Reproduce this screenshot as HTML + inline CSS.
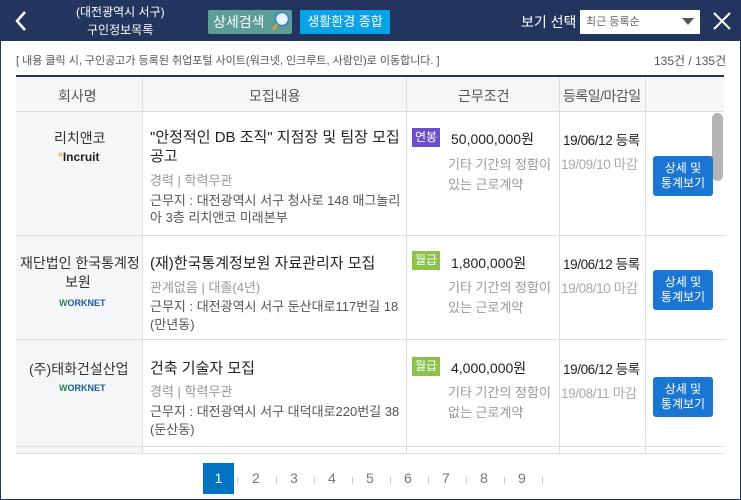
<!DOCTYPE html>
<html><head><meta charset="utf-8"><style>
*{margin:0;padding:0;box-sizing:border-box}
body{width:741px;height:500px;overflow:hidden;background:#fff;font-family:"Liberation Sans","Noto Sans CJK KR",sans-serif;position:relative}
.a{position:absolute;white-space:nowrap}
.hd{position:absolute;left:0;top:0;width:741px;height:41px;background:#22355e}
.frame{position:absolute;left:0;top:0;width:741px;height:500px;border:1px solid #22355e;border-top:none}
.w{color:#fff}
.vl{position:absolute;width:1px;background:#dedede}
.hl{position:absolute;height:1px;background:#dedede}
.t{font-size:15px;color:#222}
.g{font-size:13px;color:#999}
.d{font-size:13px;color:#555}
.bd{position:absolute;width:28px;height:19px;color:#fff;font-size:12px;text-align:center;line-height:19px}
.btn{position:absolute;left:653px;width:60px;height:40px;background:#1a76d2;border-radius:3px;color:#fff;font-size:12px;text-align:center;line-height:15px;padding-top:5px}
.pg{position:absolute;top:470px;font-size:14px;color:#777}
.sep{position:absolute;top:477px;width:1px;height:7px;background:#ccc}
.dt{font-size:14px;color:#222}
.dd{font-size:13.5px;color:#222;letter-spacing:-0.4px}
.dg{font-size:13.5px;color:#aaa;letter-spacing:-0.4px}
</style></head><body>
<div class="hd"></div>
<svg class="a" style="left:14px;top:10px" width="14" height="22"><path d="M11 2 L3 11 L11 20" stroke="#fff" stroke-width="2.5" fill="none"/></svg>
<div class="a w" style="left:76px;top:3px;font-size:12px">(대전광역시 서구)</div>
<div class="a w" style="left:87px;top:21px;font-size:12px">구인정보목록</div>
<div class="a" style="left:208px;top:10px;width:84px;height:24px;background:#5c9d98;border-radius:2px;color:#fff;font-size:14px;line-height:24px;padding-left:5px">상세검색</div>
<svg class="a" style="left:270px;top:11px" width="20" height="22"><circle cx="12" cy="8" r="6.5" fill="#e8f4ff" stroke="#3a7bd5" stroke-width="1.5"/><path d="M7 13 L3 19" stroke="#e0a040" stroke-width="2.5"/></svg>
<div class="a" style="left:300px;top:10px;width:90px;height:24px;background:#0aa3ea;color:#fff;font-size:13px;line-height:24px;text-align:center">생활환경 종합</div>
<div class="a w" style="left:521px;top:12px;font-size:14px">보기 선택</div>
<div class="a" style="left:580px;top:10px;width:120px;height:24px;background:#fff;font-size:11px;color:#666;line-height:24px;padding-left:6px">최근 등록순</div>
<svg class="a" style="left:682px;top:18px" width="12" height="8"><path d="M0 0 L12 0 L6 7Z" fill="#555"/></svg>
<svg class="a" style="left:713px;top:12px" width="18" height="18"><path d="M1 1 L17 17 M17 1 L1 17" stroke="#fff" stroke-width="2"/></svg>
<div class="frame"></div>

<div class="a" style="left:16px;top:52px;font-size:11px;color:#555">[ 내용 클릭 시, 구인공고가 등록된 취업포털 사이트(워크넷, 인크루트, 사람인)로 이동합니다. ]</div>
<div class="a" style="left:654px;top:52px;font-size:12px;color:#555">135건 / 135건</div>
<div class="a" style="left:16px;top:75px;width:708px;height:2px;background:#22355e"></div>
<div class="a" style="left:16px;top:77px;width:708px;height:34px;background:#f5f6f8"></div>
<div class="a" style="left:16px;top:111px;width:126px;height:343px;background:#f5f6f8"></div>
<div class="vl" style="left:142px;top:77px;height:377px"></div>
<div class="vl" style="left:406px;top:77px;height:377px"></div>
<div class="vl" style="left:559px;top:77px;height:377px"></div>
<div class="vl" style="left:645px;top:77px;height:377px"></div>
<div class="hl" style="left:16px;top:111px;width:708px"></div>
<div class="hl" style="left:16px;top:235px;width:708px"></div>
<div class="hl" style="left:16px;top:339px;width:708px"></div>
<div class="hl" style="left:16px;top:446px;width:708px"></div>
<div class="hl" style="left:16px;top:453px;width:708px"></div>
<div class="a" style="left:58px;top:86px;font-size:14px;color:#555">회사명</div>
<div class="a" style="left:249px;top:86px;font-size:14px;color:#555">모집내용</div>
<div class="a" style="left:458px;top:86px;font-size:14px;color:#555">근무조건</div>
<div class="a" style="left:563px;top:86px;font-size:14px;color:#555;letter-spacing:-0.5px">등록일/마감일</div>
<div class="a" style="left:712px;top:113px;width:11px;height:68px;background:#b5b5b5;border-radius:6px"></div>

<!-- row1 -->
<div class="a" style="left:54px;top:128px;font-size:14px;color:#333">리치앤코</div>
<div class="a" style="left:58px;top:150px;font-size:12px;font-weight:bold;color:#222"><span style="color:#f39c12">°</span>Incruit</div>
<div class="a t" style="left:150px;top:126px">"안정적인 DB 조직" 지점장 및 팀장 모집</div>
<div class="a t" style="left:150px;top:145px">공고</div>
<div class="a g" style="left:150px;top:170px">경력 | 학력무관</div>
<div class="a d" style="left:150px;top:190px">근무지 : 대전광역시 서구 청사로 148 매그놀리</div>
<div class="a d" style="left:150px;top:207px">아 3층 리치앤코 미래본부</div>
<div class="bd" style="left:412px;top:128px;background:#6a4fc9">연봉</div>
<div class="a dt" style="left:451px;top:129px">50,000,000원</div>
<div class="a g" style="left:448px;top:154px">기타 기간의 정함이</div>
<div class="a g" style="left:448px;top:174px">있는 근로계약</div>
<div class="a dd" style="left:563px;top:129px">19/06/12 등록</div>
<div class="a dg" style="left:561px;top:153px">19/09/10 마감</div>
<div class="btn" style="top:156px">상세 및<br>통계보기</div>

<!-- row2 -->
<div class="a" style="left:20px;top:253px;font-size:14px;color:#333">재단법인 한국통계정</div>
<div class="a" style="left:65px;top:272px;font-size:14px;color:#333">보원</div>
<div class="a" style="left:59px;top:298px;font-size:9px;font-weight:bold;color:#2c8a3c">W<span style="color:#1a5aa0">ORKNET</span></div>
<div class="a t" style="left:150px;top:252px">(재)한국통계정보원 자료관리자 모집</div>
<div class="a g" style="left:150px;top:277px">관계없음 | 대졸(4년)</div>
<div class="a d" style="left:150px;top:296px">근무지 : 대전광역시 서구 둔산대로117번길 18</div>
<div class="a d" style="left:150px;top:314px">(만년동)</div>
<div class="bd" style="left:412px;top:251px;background:#8bc34a">월급</div>
<div class="a dt" style="left:451px;top:253px">1,800,000원</div>
<div class="a g" style="left:448px;top:277px">기타 기간의 정함이</div>
<div class="a g" style="left:448px;top:297px">있는 근로계약</div>
<div class="a dd" style="left:563px;top:253px">19/06/12 등록</div>
<div class="a dg" style="left:561px;top:277px">19/08/10 마감</div>
<div class="btn" style="top:270px">상세 및<br>통계보기</div>

<!-- row3 -->
<div class="a" style="left:29px;top:359px;font-size:14px;color:#333">(주)태화건설산업</div>
<div class="a" style="left:59px;top:383px;font-size:9px;font-weight:bold;color:#2c8a3c">W<span style="color:#1a5aa0">ORKNET</span></div>
<div class="a t" style="left:150px;top:357px">건축 기술자 모집</div>
<div class="a g" style="left:150px;top:381px">경력 | 학력무관</div>
<div class="a d" style="left:150px;top:401px">근무지 : 대전광역시 서구 대덕대로220번길 38</div>
<div class="a d" style="left:150px;top:419px">(둔산동)</div>
<div class="bd" style="left:412px;top:357px;background:#8bc34a">월급</div>
<div class="a dt" style="left:451px;top:358px">4,000,000원</div>
<div class="a g" style="left:448px;top:382px">기타 기간의 정함이</div>
<div class="a g" style="left:448px;top:402px">없는 근로계약</div>
<div class="a dd" style="left:563px;top:358px">19/06/12 등록</div>
<div class="a dg" style="left:561px;top:382px">19/08/11 마감</div>
<div class="btn" style="top:377px">상세 및<br>통계보기</div>

<!-- pagination -->
<div class="a" style="left:203px;top:463px;width:31px;height:31px;background:#0073c2;color:#fff;font-size:14px;text-align:center;line-height:31px">1</div>
<div class="pg" style="left:252px">2</div><div class="sep" style="left:237px"></div><div class="sep" style="left:276px"></div>
<div class="pg" style="left:290px">3</div><div class="sep" style="left:314px"></div>
<div class="pg" style="left:328px">4</div><div class="sep" style="left:352px"></div>
<div class="pg" style="left:366px">5</div><div class="sep" style="left:390px"></div>
<div class="pg" style="left:404px">6</div><div class="sep" style="left:428px"></div>
<div class="pg" style="left:442px">7</div><div class="sep" style="left:466px"></div>
<div class="pg" style="left:480px">8</div><div class="sep" style="left:504px"></div>
<div class="pg" style="left:518px">9</div><div class="sep" style="left:542px"></div>
</body></html>
